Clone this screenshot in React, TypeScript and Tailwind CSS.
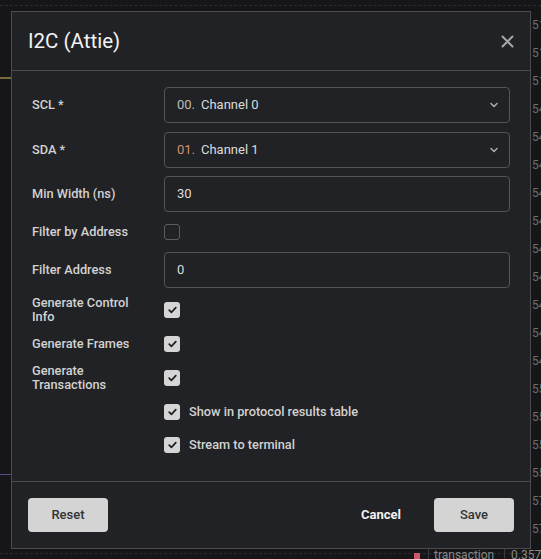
import { useState } from "react";

// ─── Types ────────────────────────────────────────────────────────────────────

type Channel = { index: string; name: string; accent?: boolean };

// ─── Bits ─────────────────────────────────────────────────────────────────────

function Chevron() {
  return (
    <svg width="10" height="10" viewBox="0 0 10 10" className="text-[#a8a8a8]">
      <path d="M2 3.5 L5 6.5 L8 3.5" fill="none" stroke="currentColor" strokeWidth="1.6" strokeLinecap="round" strokeLinejoin="round" />
    </svg>
  );
}

function Check({ checked, onChange }: { checked: boolean; onChange: () => void }) {
  return (
    <button
      type="button"
      onClick={onChange}
      className={
        checked
          ? "flex h-4 w-4 shrink-0 items-center justify-center rounded-[3px] bg-[#d5d5d5]"
          : "h-4 w-4 shrink-0 rounded-[3px] border border-[#5c5c5c]"
      }
    >
      {checked && (
        <svg width="9" height="8" viewBox="0 0 9 8">
          <path d="M1.2 4.2 L3.4 6.3 L7.8 1.6" fill="none" stroke="#1e1e20" strokeWidth="1.7" strokeLinecap="round" strokeLinejoin="round" />
        </svg>
      )}
    </button>
  );
}

function Select({ ch }: { ch: Channel }) {
  return (
    <div className="flex h-[36px] flex-1 items-center rounded-[4px] border border-[#545454] pl-3 pr-[10px] text-[13px]">
      <span className={ch.accent ? "w-[24px] text-[#d4906e]" : "w-[24px] text-[#bdbdbd]"}>{ch.index}</span>
      <span className="text-[#dcdcdc]">{ch.name}</span>
      <span className="ml-auto">
        <Chevron />
      </span>
    </div>
  );
}

function TextInput({ value }: { value: string }) {
  return (
    <div className="flex h-[36px] flex-1 items-center rounded-[4px] border border-[#545454] px-3 text-[13px] text-[#dcdcdc]">
      {value}
    </div>
  );
}

function Label({ children }: { children: React.ReactNode }) {
  return <div className="w-[132px] shrink-0 pr-3 text-[12.75px] font-medium leading-[14px] text-[#d2d2d2]">{children}</div>;
}

// ─── Background (the app behind the modal) ──────────────────────────────────

const sideNums = ["51", "51", "51", "54", "54", "54", "54", "54", "54", "54", "54", "54", "54", "55", "55", "55", "55", "57", "57"];

function Backdrop() {
  return (
    <div className="absolute inset-0 overflow-hidden bg-[#161618]">
      <div className="absolute left-0 right-0 top-[5px] border-t border-dashed border-[#2c2c30]" />
      <div className="absolute left-0 right-0 top-[553px] border-t border-dashed border-[#2c2c30]" />
      <div className="absolute left-0 top-[77px] h-[2px] w-[11px] bg-[#7a6a3a]" />
      <div className="absolute left-0 top-[474px] h-px w-[11px] bg-[#5a4a8a]" />
      <div className="absolute bottom-0 left-[428px] top-[548px] border-l border-[#3a3a3e]" />
      <div className="absolute bottom-0 left-[414px] top-[548px] w-[90px] text-[12px] leading-[14px] text-[#8a8a8a]">
        <span className="inline-block h-[6px] w-[6px] bg-[#c85a6a]" />
        <span className="ml-[14px]">transaction</span>
      </div>
      <div className="absolute bottom-0 left-[504px] top-[548px] border-l border-[#3a3a3e]" />
      <div className="absolute left-[511px] top-[548px] text-[12px] leading-[14px] text-[#8a8a8a]">0.357</div>
      <div className="absolute bottom-[14px] left-[530px] top-0 flex flex-col overflow-hidden pt-[11px] pl-[2px] text-[12px] leading-[28px] text-[#6e6e72]">
        {sideNums.map((n, i) => (
          <span key={i}>{n}</span>
        ))}
      </div>
    </div>
  );
}

// ─── App ──────────────────────────────────────────────────────────────────────

export default function App() {
  const [flags, setFlags] = useState({
    filter: false,
    control: true,
    frames: true,
    transactions: true,
    table: true,
    terminal: true,
  });
  const toggle = (k: keyof typeof flags) => setFlags((f) => ({ ...f, [k]: !f[k] }));

  return (
    <div className="relative h-[559px] w-[541px] overflow-hidden font-['Roboto',sans-serif]">
      <Backdrop />

      {/* ── Modal ─────────────────────────────────────────────────────────── */}
      <div className="absolute left-[11px] top-[11px] flex h-[538px] w-[520px] flex-col border border-[#4c4c50] bg-[#212225]">
        {/* header */}
        <div className="flex h-[59px] shrink-0 items-center justify-between border-b border-[#4c4c50] pl-4 pr-4">
          <h2 className="text-[20.5px] font-normal text-[#f2f2f2]">I2C (Attie)</h2>
          <svg width="13" height="13" viewBox="0 0 13 13" className="text-[#a6a6a6]">
            <path d="M1.5 1.5 L11.5 11.5 M11.5 1.5 L1.5 11.5" stroke="currentColor" strokeWidth="2" strokeLinecap="round" />
          </svg>
        </div>

        {/* body */}
        <div className="flex flex-1 flex-col gap-2 px-5 pt-4">
          <div className="flex items-center">
            <Label>SCL *</Label>
            <Select ch={{ index: "00.", name: "Channel 0" }} />
          </div>
          <div className="mt-px flex items-center">
            <Label>SDA *</Label>
            <Select ch={{ index: "01.", name: "Channel 1", accent: true }} />
          </div>
          <div className="flex items-center">
            <Label>Min Width (ns)</Label>
            <TextInput value="30" />
          </div>
          <div className="flex h-6 items-center">
            <Label>Filter by Address</Label>
            <Check checked={flags.filter} onChange={() => toggle("filter")} />
          </div>
          <div className="flex items-center">
            <Label>Filter Address</Label>
            <TextInput value="0" />
          </div>
          <div className="flex h-7 items-center">
            <Label>
              Generate Control
              <br />
              Info
            </Label>
            <Check checked={flags.control} onChange={() => toggle("control")} />
          </div>
          <div className="flex h-6 items-center">
            <Label>Generate Frames</Label>
            <Check checked={flags.frames} onChange={() => toggle("frames")} />
          </div>
          <div className="flex h-7 items-center">
            <Label>
              Generate
              <br />
              Transactions
            </Label>
            <Check checked={flags.transactions} onChange={() => toggle("transactions")} />
          </div>
          <div className="flex h-6 items-center pl-[132px]">
            <Check checked={flags.table} onChange={() => toggle("table")} />
            <span className="ml-[9px] text-[12.75px] font-medium text-[#d2d2d2]">Show in protocol results table</span>
          </div>
          <div className="mt-px flex h-6 items-center pl-[132px]">
            <Check checked={flags.terminal} onChange={() => toggle("terminal")} />
            <span className="ml-[9px] text-[12.75px] font-medium text-[#d2d2d2]">Stream to terminal</span>
          </div>
        </div>

        {/* footer */}
        <div className="flex h-[67px] shrink-0 items-center border-t border-[#4c4c50] px-4">
          <button className="h-[34px] w-[80px] rounded-[4px] bg-[#d4d4d4] text-[13px] font-medium text-[#333336]">Reset</button>
          <button className="ml-auto h-[34px] w-[80px] text-[13px] font-bold text-[#f0f0f0]">Cancel</button>
          <button className="ml-[13px] h-[34px] w-[80px] rounded-[4px] bg-[#d4d4d4] text-[13px] font-medium text-[#333336]">Save</button>
        </div>
      </div>
    </div>
  );
}
